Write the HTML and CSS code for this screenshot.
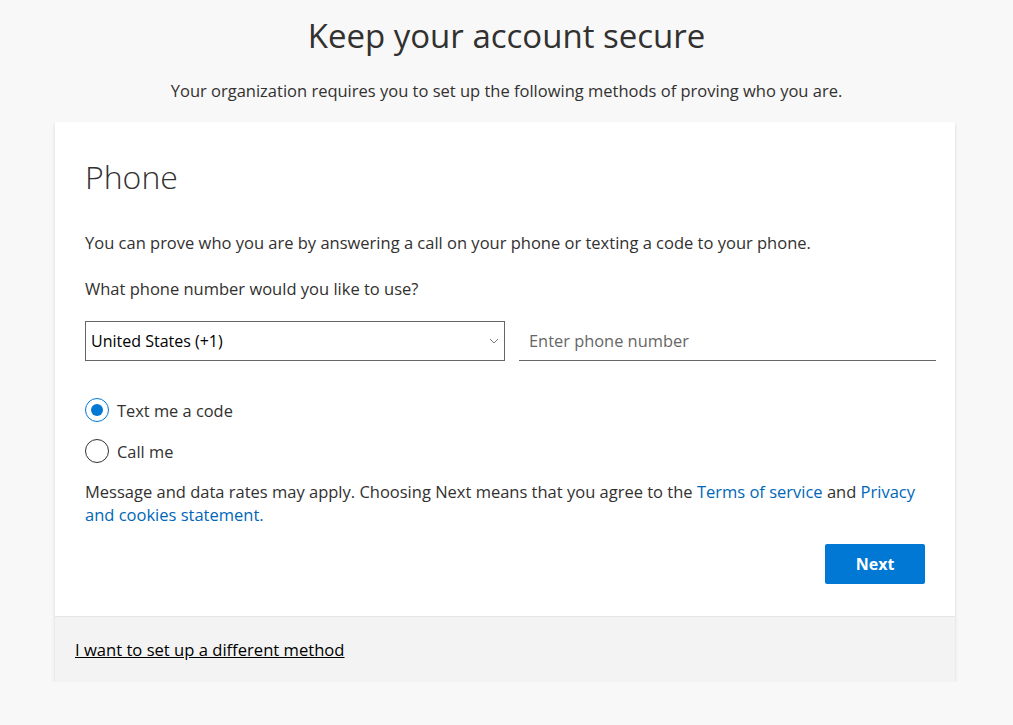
FILE: index.html
```html
<!DOCTYPE html>
<html lang="en">
<head>
    <meta charset="UTF-8">
    <title>Keep your account secure</title>
    <link rel="stylesheet" href="styles.css">
</head>
<body>
    <h1 class="title">Keep your account secure</h1>
    <p class="subtitle">Your organization requires you to set up the following methods of proving who you are.</p>

    <div class="card">
        <div class="card-body">
            <h2 class="method">Phone</h2>
            <p class="text">You can prove who you are by answering a call on your phone or texting a code to your phone.</p>
            <p class="text question">What phone number would you like to use?</p>

            <div class="phone-row">
                <div class="select">
                    <span>United States (+1)</span>
                    <svg width="10" height="6" viewBox="0 0 10 6"><path d="M1 1l4 4 4-4" fill="none" stroke="#777" stroke-width="1"/></svg>
                </div>
                <div class="phone-input">Enter phone number</div>
            </div>

            <div class="radios">
                <label class="radio checked"><span class="dot"></span>Text me a code</label>
                <label class="radio"><span class="dot"></span>Call me</label>
            </div>

            <p class="text fine">Message and data rates may apply. Choosing Next means that you agree to the <a href="#">Terms of service</a> and <a href="#">Privacy and cookies statement.</a></p>

            <div class="actions">
                <button class="next">Next</button>
            </div>
        </div>
        <div class="card-footer">
            <a href="#" class="alt">I want to set up a different method</a>
        </div>
    </div>
</body>
</html>
```

FILE: styles.css
```css
body {
    margin: 0;
    background: #f8f8f8;
    font-family: "Open Sans", "Noto Sans", sans-serif;
    color: #323130;
}
.title {
    margin: 14px 0 0;
    text-align: center;
    font-size: 33px;
    font-weight: 400;
    line-height: 44px;
    color: #323130;
}
.subtitle {
    margin: 21px 0 0;
    text-align: center;
    font-size: 16.5px;
    line-height: 24px;
}
.card {
    width: 900px;
    margin: 19px 0 0 55px;
    background: #fff;
    box-shadow: 0 1.6px 3.6px rgba(0,0,0,0.13), 0 0.3px 0.9px rgba(0,0,0,0.11);
}
.card-body { padding: 30px 30px 32px; }
.method {
    margin: 3px 0 0;
    font-size: 32px;
    font-weight: 300;
    line-height: 44px;
}
.text {
    margin: 0;
    font-size: 16.5px;
    line-height: 23px;
}
.method + .text { margin-top: 32px; }
.question { margin-top: 23px; }
.phone-row {
    display: flex;
    gap: 14px;
    margin: 21px -11px 0 0;
}
.select {
    box-sizing: border-box;
    width: 420px;
    height: 40px;
    border: 1px solid #666;
    display: flex;
    align-items: center;
    justify-content: space-between;
    padding: 0 5px 0 5px;
    font-size: 16px;
    color: #000;
}
.phone-input {
    flex: 1;
    box-sizing: border-box;
    height: 40px;
    border-bottom: 1px solid #666;
    padding: 8px 10px 0;
    font-size: 16.4px;
    color: #666;
}
.radios { margin-top: 37px; }
.radio {
    display: flex;
    align-items: center;
    height: 24px;
    margin-bottom: 17px;
    font-size: 16.4px;
}
.dot {
    box-sizing: border-box;
    width: 24px;
    height: 24px;
    border: 1px solid #323130;
    border-radius: 50%;
    margin-right: 8px;
    position: relative;
}
.checked .dot { border-color: #0078d4; }
.checked .dot::after {
    content: "";
    position: absolute;
    left: 5px;
    top: 5px;
    width: 12px;
    height: 12px;
    border-radius: 50%;
    background: #0078d4;
}
.fine { margin-top: 0; }
.fine a { color: #0067b8; text-decoration: none; }
.actions {
    display: flex;
    justify-content: flex-end;
    margin-top: 18px;
}
.next {
    width: 100px;
    height: 40px;
    border: none;
    border-radius: 2px;
    background: #0078d4;
    color: #fff;
    font-family: inherit;
    font-size: 16px;
    font-weight: 700;
}
.card-footer {
    background: #f3f3f3;
    border-top: 1px solid #e5e5e5;
    padding: 21px 20px 20px;
    height: 24px;
}
.alt {
    color: #000;
    font-size: 16.6px;
    line-height: 24px;
}
```
